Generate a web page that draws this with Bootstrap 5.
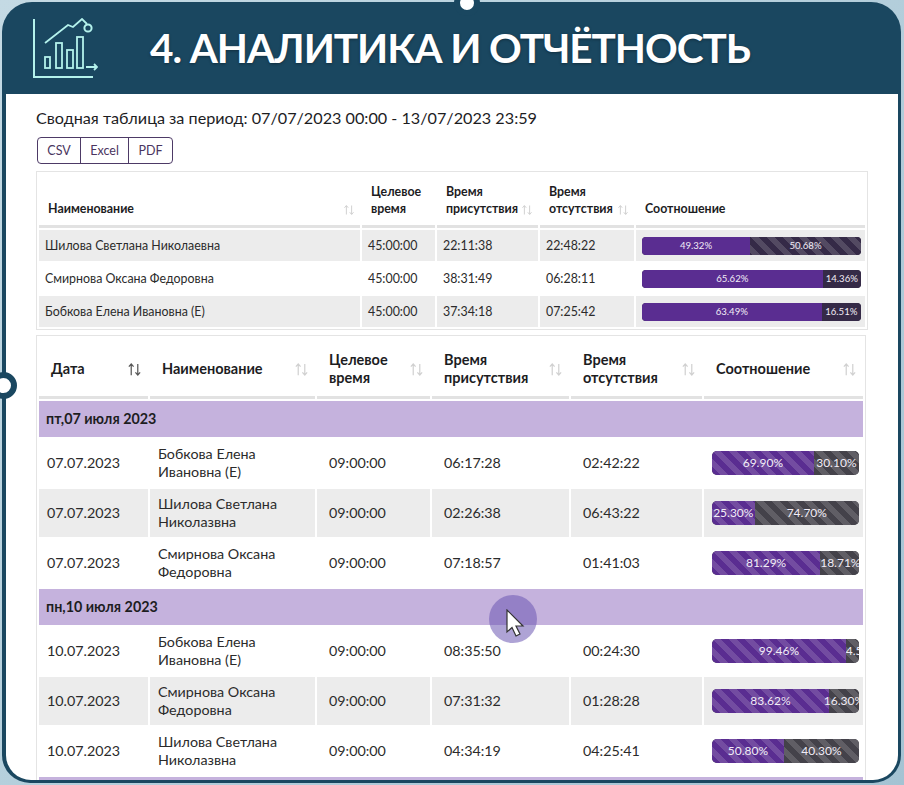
<!DOCTYPE html>
<html>
  <head>
    <meta charset="utf-8" />
    <meta name="viewport" content="width=device-width" />
    <title>Аналитика и отчётность</title>
    <link href="https://cdn.jsdelivr.net/npm/bootstrap@5.3.3/dist/css/bootstrap.min.css" rel="stylesheet" />
    <style>
      html, body { height: 100%; }
      body { margin: 0; overflow: hidden; background: linear-gradient(135deg, #c4dae4, #a4c3d3); font-family: Lato, "Noto Sans", sans-serif; color: #1d1d1f; }
      .slide { position: relative; width: 899px; height: 781px; margin: 2px 0 0 2px; }
      .slide-frame { height: 100%; display: flex; flex-direction: column; background: #1a4760; border-radius: 30px 30px 28px 28px; overflow: hidden; padding: 0 3px 3px 4px; }
      .slide-head { flex: 0 0 92px; display: flex; align-items: center; gap: 52px; padding: 0 0 0 26px; }
      .slide-title { margin: 0; font-family: Lato, "Noto Sans", sans-serif; font-size: 40.5px; font-weight: 700; color: #fff; letter-spacing: -1.05px; text-shadow: 0 1px 3px rgba(0,0,0,.35); }
      .slide-body { flex: 1; min-height: 0; background: #fff; border-radius: 0 0 25px 25px; overflow: hidden; padding: 13px 0 0 31px; }
      .period { font-size: 16.2px; line-height: 22px; margin: 0 0 8px -1px; }
      .export-group .btn { --bs-btn-color: #4a3560; --bs-btn-border-color: #4d3a66; font-size: 12.5px; line-height: 25px; padding: 0 9.3px; border-radius: 4px; height: 27px; }
      .tbl-top, .tbl-days { table-layout: fixed; border-collapse: separate; border-spacing: 2px; background: #fff; border: 1px solid #e4e4e4; --bs-table-border-color: transparent; margin: 0; }
      .tbl-top { width: 832px; margin-top: 7px; margin-left: -1px; font-size: 12.4px; }
      .tbl-days { width: 830px; margin-top: 5px; margin-left: -1px; font-size: 14.3px; line-height: 18px; }
      .tbl-top th, .tbl-top td, .tbl-days th, .tbl-days td { padding: 0 0 0 8px; vertical-align: middle; border: 0; box-shadow: none; color: #2b2b2b; }
      .tbl-top th, .tbl-days th { position: relative; font-weight: 700; border-bottom: 3px solid #e2e2e2; color: #1d1d1f; }
      .tbl-top th { height: 54px; padding-left: 9px; line-height: 17px; font-size: 12.4px; vertical-align: bottom; padding-bottom: 8px; }
      .tbl-top td { height: 31px; padding-left: 6px; }
      .tbl-days th { height: 61px; padding: 3px 0 0 12px; font-size: 14.5px; }
      .tbl-days td { height: 48px; padding-left: 8px; }
      .tbl-days td.cell-time { padding-left: 12px; }
      .tbl-days tr.day-row > td { height: 36px; background: #c5b2dd; font-weight: 700; padding-left: 7px; font-size: 14.3px; color: #1d1d1f; }
      tr.row-grey > td { background: #ececec; }
      .sort-mark { position: absolute; right: 5px; bottom: 9px; width: 12px; height: 12px; color: #d0d0d0; }
      .tbl-days .sort-mark { width: 15px; height: 15px; right: 6px; bottom: 19px; }
      .sort-mark.is-dark { color: #555; }
      .bar-pair { height: 18px; border-radius: 4px; font-size: 9.6px; background: #352a47; width: 219px; }
      .tbl-days .bar-pair { height: 24px; border-radius: 5px; font-size: 12px; width: 147px; background: #44424a; }
      .bar-pair .progress-bar { background-color: #5a2d91; overflow: hidden; white-space: nowrap; color: #f1ecf6; }
      .bar-pair .bar-rest { background-color: #352a47; }
      .tbl-days .bar-pair .bar-rest { background-color: #44424a; }
      .dot-top, .dot-left { position: absolute; border-radius: 50%; background: #fff; border-style: solid; border-color: #1a4760; }
      .dot-top { width: 26px; height: 26px; border-width: 6px; left: 452px; top: -12px; }
      .dot-left { width: 27px; height: 27px; border-width: 6px; left: -12px; top: 370px; }
      .pointer-spot { position: absolute; left: 487px; top: 593px; width: 48px; height: 48px; border-radius: 50%; background: rgba(108, 88, 178, .55); }
      .pointer-arrow { position: absolute; left: 503px; top: 607px; width: 20px; height: 29px; }
    </style>
  </head>

  <body>
    <svg width="0" height="0" class="d-block position-absolute">
      <symbol id="sort" viewBox="0 0 16 16">
        <path d="M4.5 14V2.5M2 5l2.5-3L7 5M11.5 2v11.5M9 11l2.5 3 2.5-3" fill="none" stroke="currentColor" stroke-width="1.3" />
      </symbol>
    </svg>

    <div class="slide">
      <div class="slide-frame">
        <header class="slide-head">
          <svg width="66" height="60" viewBox="0 0 66 60" fill="none" stroke="#b4f2ec" stroke-width="1.8">
            <path d="M2 1V59H61" stroke-width="2" />
            <path d="M13 25L36 7L41 9L50 1L55 6" />
            <circle cx="56" cy="10" r="3.6" stroke-width="2" />
            <rect x="13" y="39" width="5" height="11" />
            <rect x="24" y="25" width="6" height="25" />
            <rect x="35" y="32" width="6" height="18" />
            <rect x="45" y="19" width="6" height="31" />
            <path d="M54 49H65M62 46l3 3-3 3" />
          </svg>
          <h1 class="slide-title">4. АНАЛИТИКА И ОТЧЁТНОСТЬ</h1>
        </header>

        <main class="slide-body">
          <p class="period">Сводная таблица за период: 07/07/2023 00:00 - 13/07/2023 23:59</p>
          <div class="btn-group export-group" role="group">
            <button type="button" class="btn btn-outline-dark">CSV</button>
            <button type="button" class="btn btn-outline-dark">Excel</button>
            <button type="button" class="btn btn-outline-dark">PDF</button>
          </div>

          <table class="table tbl-top">
            <colgroup><col style="width:321px" /><col style="width:73px" /><col style="width:101px" /><col style="width:94px" /><col /></colgroup>
            <thead>
              <tr>
                <th>Наименование<svg class="sort-mark"><use href="#sort" /></svg></th>
                <th>Целевое время</th>
                <th>Время присутствия<svg class="sort-mark"><use href="#sort" /></svg></th>
                <th>Время отсутствия<svg class="sort-mark"><use href="#sort" /></svg></th>
                <th>Соотношение</th>
              </tr>
            </thead>
            <tbody>
              <tr class="row-grey">
                <td>Шилова Светлана Николаевна</td><td>45:00:00</td><td>22:11:38</td><td>22:48:22</td>
                <td><div class="progress bar-pair"><div class="progress-bar" style="width:49.32%">49.32%</div><div class="progress-bar progress-bar-striped bar-rest" style="width:50.68%">50.68%</div></div></td>
              </tr>
              <tr>
                <td>Смирнова Оксана Федоровна</td><td>45:00:00</td><td>38:31:49</td><td>06:28:11</td>
                <td><div class="progress bar-pair"><div class="progress-bar" style="width:82.5%">65.62%</div><div class="progress-bar bar-rest" style="width:17.5%">14.36%</div></div></td>
              </tr>
              <tr class="row-grey">
                <td>Бобкова Елена Ивановна (Е)</td><td>45:00:00</td><td>37:34:18</td><td>07:25:42</td>
                <td><div class="progress bar-pair"><div class="progress-bar" style="width:82%">63.49%</div><div class="progress-bar bar-rest" style="width:18%">16.51%</div></div></td>
              </tr>
            </tbody>
          </table>

          <table class="table tbl-days">
            <colgroup><col style="width:109px" /><col style="width:165px" /><col style="width:113px" /><col style="width:137px" /><col style="width:131px" /><col /></colgroup>
            <thead>
              <tr>
                <th>Дата<svg class="sort-mark is-dark"><use href="#sort" /></svg></th>
                <th>Наименование<svg class="sort-mark"><use href="#sort" /></svg></th>
                <th>Целевое время<svg class="sort-mark"><use href="#sort" /></svg></th>
                <th>Время присутствия<svg class="sort-mark"><use href="#sort" /></svg></th>
                <th>Время отсутствия<svg class="sort-mark"><use href="#sort" /></svg></th>
                <th>Соотношение<svg class="sort-mark"><use href="#sort" /></svg></th>
              </tr>
            </thead>
            <tbody>
              <tr class="day-row"><td colspan="6">пт,07 июля 2023</td></tr>
              <tr>
                <td>07.07.2023</td><td>Бобкова Елена Ивановна (Е)</td><td class="cell-time">09:00:00</td><td class="cell-time">06:17:28</td><td class="cell-time">02:42:22</td>
                <td><div class="progress bar-pair"><div class="progress-bar progress-bar-striped" style="width:69.2%">69.90%</div><div class="progress-bar progress-bar-striped bar-rest" style="width:30.8%">30.10%</div></div></td>
              </tr>
              <tr class="row-grey">
                <td>07.07.2023</td><td>Шилова Светлана Николазвна</td><td class="cell-time">09:00:00</td><td class="cell-time">02:26:38</td><td class="cell-time">06:43:22</td>
                <td><div class="progress bar-pair"><div class="progress-bar progress-bar-striped" style="width:29%">25.30%</div><div class="progress-bar progress-bar-striped bar-rest" style="width:71%">74.70%</div></div></td>
              </tr>
              <tr>
                <td>07.07.2023</td><td>Смирнова Оксана Федоровна</td><td class="cell-time">09:00:00</td><td class="cell-time">07:18:57</td><td class="cell-time">01:41:03</td>
                <td><div class="progress bar-pair"><div class="progress-bar progress-bar-striped" style="width:73.6%">81.29%</div><div class="progress-bar progress-bar-striped bar-rest" style="width:26.4%">18.71%</div></div></td>
              </tr>
              <tr class="day-row"><td colspan="6">пн,10 июля 2023</td></tr>
              <tr>
                <td>10.07.2023</td><td>Бобкова Елена Ивановна (Е)</td><td class="cell-time">09:00:00</td><td class="cell-time">08:35:50</td><td class="cell-time">00:24:30</td>
                <td><div class="progress bar-pair"><div class="progress-bar progress-bar-striped" style="width:91%">99.46%</div><div class="progress-bar progress-bar-striped bar-rest" style="width:9%">4.54%</div></div></td>
              </tr>
              <tr class="row-grey">
                <td>10.07.2023</td><td>Смирнова Оксана Федоровна</td><td class="cell-time">09:00:00</td><td class="cell-time">07:31:32</td><td class="cell-time">01:28:28</td>
                <td><div class="progress bar-pair"><div class="progress-bar progress-bar-striped" style="width:79.6%">83.62%</div><div class="progress-bar progress-bar-striped bar-rest overflow-visible align-items-center" style="width:20.4%">16.30%</div></div></td>
              </tr>
              <tr>
                <td>10.07.2023</td><td>Шилова Светлана Николазвна</td><td class="cell-time">09:00:00</td><td class="cell-time">04:34:19</td><td class="cell-time">04:25:41</td>
                <td><div class="progress bar-pair"><div class="progress-bar progress-bar-striped" style="width:49%">50.80%</div><div class="progress-bar progress-bar-striped bar-rest" style="width:51%">40.30%</div></div></td>
              </tr>
              <tr class="day-row"><td colspan="6"></td></tr>
            </tbody>
          </table>
        </main>
      </div>

      <span class="dot-top"></span>
      <span class="dot-left"></span>
      <span class="pointer-spot"></span>
      <svg class="pointer-arrow" viewBox="0 0 20 29"><path d="M2 1V23L7 18.5L11 27L15 25L11 17H18Z" fill="#fff" stroke="#333" stroke-width="1.2" /></svg>
    </div>

    <script src="https://cdn.jsdelivr.net/npm/bootstrap@5.3.3/dist/js/bootstrap.bundle.min.js"></script>
  </body>
</html>
